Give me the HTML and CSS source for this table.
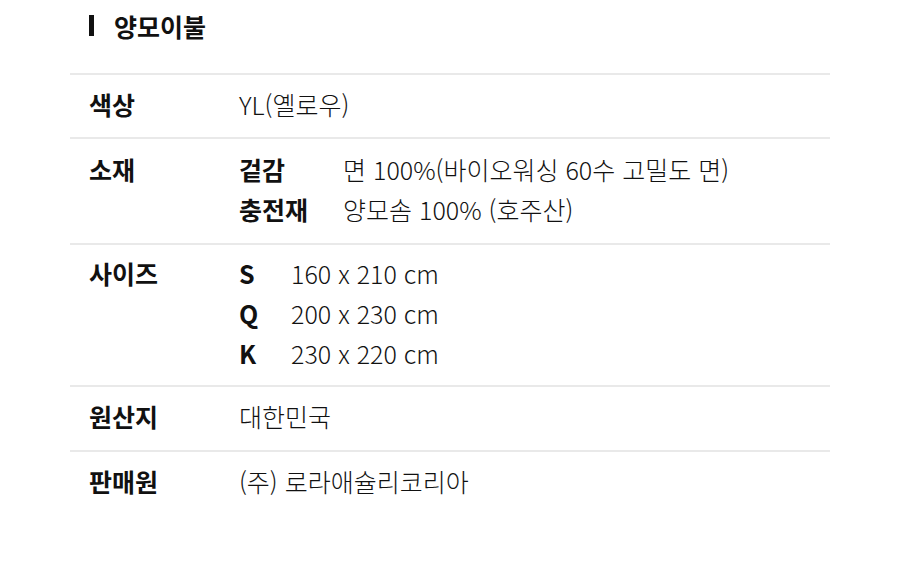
FILE: index.html
```html
<!DOCTYPE html>
<html lang="ko">
<head>
<meta charset="utf-8">
<link rel="stylesheet" href="styles.css">
</head>
<body>
<div class="wrap">
  <div class="title"><span class="bar"></span><h2>양모이불</h2></div>
  <div class="table">
    <div class="row">
      <div class="label">색상</div>
      <div class="value"><div class="line">YL(옐로우)</div></div>
    </div>
    <div class="row material">
      <div class="label">소재</div>
      <div class="value">
        <div class="line sub"><span class="k mat">겉감</span><span>면 100%(바이오워싱 60수 고밀도 면)</span></div>
        <div class="line sub"><span class="k mat">충전재</span><span>양모솜 100% (호주산)</span></div>
      </div>
    </div>
    <div class="row sizes">
      <div class="label">사이즈</div>
      <div class="value">
        <div class="line sub"><span class="k sz">S</span><span>160 x 210 cm</span></div>
        <div class="line sub"><span class="k sz">Q</span><span>200 x 230 cm</span></div>
        <div class="line sub"><span class="k sz">K</span><span>230 x 220 cm</span></div>
      </div>
    </div>
    <div class="row origin">
      <div class="label">원산지</div>
      <div class="value"><div class="line">대한민국</div></div>
    </div>
    <div class="row">
      <div class="label">판매원</div>
      <div class="value"><div class="line">(주) 로라애슐리코리아</div></div>
    </div>
  </div>
</div>
</body>
</html>
```

FILE: styles.css
```css
html, body {
  margin: 0;
  padding: 0;
  background: #fff;
}
body {
  font-family: "Noto Sans CJK KR", "Noto Sans", sans-serif;
  color: #111;
}
.wrap {
  width: 760px;
  margin-left: 70px;
}
.title {
  display: flex;
  align-items: center;
  height: 51px;
  padding-left: 19px;
  margin-bottom: 22px;
}
.bar {
  width: 5px;
  height: 21px;
  background: #111;
  margin-right: 20px;
}
.title h2 {
  margin: 0;
  font-size: 25px;
  font-weight: 700;
  line-height: 30px;
}
.row {
  display: flex;
  border-top: 2px solid #e9e9e9;
  padding: 9px 0 13px 19px;
}
.row.material {
  padding-top: 10px;
  padding-bottom: 14px;
}
.row.sizes {
  padding-top: 8px;
  padding-bottom: 12px;
}
.row.origin {
  padding-bottom: 14px;
}
.label {
  width: 150px;
  font-size: 25px;
  font-weight: 700;
  line-height: 40px;
}
.value {
  font-size: 25px;
  font-weight: 300;
  line-height: 40px;
}
.line.sub {
  display: flex;
}
.k {
  font-weight: 700;
  flex: none;
}
.k.mat {
  width: 104px;
}
.k.sz {
  width: 52px;
}
```
